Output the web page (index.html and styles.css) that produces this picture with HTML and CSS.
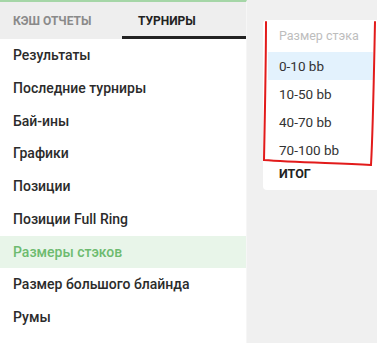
FILE: index.html
```html
<!DOCTYPE html>
<html lang="ru">
<head>
    <meta charset="UTF-8">
    <meta name="viewport" content="width=device-width, initial-scale=1.0">
    <title>Турниры</title>
    <link rel="stylesheet" href="styles.css">
</head>
<body>

<div class="page">
    <aside class="sidebar">
        <nav class="tabs">
            <button class="tab">Кэш отчеты</button>
            <button class="tab active">Турниры</button>
        </nav>
        <ul class="menu">
            <li>Результаты</li>
            <li>Последние турниры</li>
            <li>Бай-ины</li>
            <li>Графики</li>
            <li>Позиции</li>
            <li>Позиции Full Ring</li>
            <li class="active">Размеры стэков</li>
            <li>Размер большого блайнда</li>
            <li>Румы</li>
        </ul>
    </aside>

    <main class="content">
        <div class="card">
            <ul class="dropdown">
                <li class="placeholder">Размер стэка</li>
                <li class="selected">0-10 bb</li>
                <li>10-50 bb</li>
                <li>40-70 bb</li>
                <li>70-100 bb</li>
            </ul>
            <div class="total">ИТОГ</div>
        </div>
    </main>

    <!-- hand-drawn marker around the dropdown -->
    <svg class="marker" width="377" height="343" viewBox="0 0 377 343">
        <path d="M266 22 C266 60 265 110 264 160 C290 162 330 163 371 165 C373 130 374 70 375 22" />
    </svg>
</div>

</body>
</html>
```

FILE: styles.css
```css
body { margin: 0; font-family: Roboto, "Noto Sans", Arial, sans-serif; background-color: #f0f0f0; }
.page { position: relative; display: flex; width: 377px; height: 343px; overflow: hidden; }

.sidebar { width: 246px; flex: none; background-color: #fff; border-right: 1px solid #f6f6f6; border-top: 2px solid #a5d6a7; }
.tabs { display: flex; background-color: #eeeeee; height: 37px; }
.tab { border: none; background: none; font-family: inherit; font-size: 12px; font-weight: 700; text-transform: uppercase; text-align: left; cursor: pointer; padding: 0; }
.tab:first-child { width: 122px; padding-left: 13px; color: #8a8a8a; }
.tab.active { flex: 1; padding-left: 16px; color: #222; border-bottom: 3px solid #222; padding-top: 3px; }

.menu { list-style: none; margin: 0; padding: 0; }
.menu li { height: 32.75px; line-height: 32.75px; padding-left: 13px; font-size: 14px; font-weight: 500; color: #2b2b2b; }
.menu li.active { background-color: #e8f5e9; color: #6dbb6f; }

.content { flex: 1; padding: 20px 0 0 16px; }
.card { background-color: #fff; border-radius: 4px 0 0 4px; height: 168px; padding: 2px 0 0 5px; }
.dropdown { list-style: none; margin: 0; padding: 0; width: 105px; }
.dropdown li { height: 28px; line-height: 28px; padding-left: 11px; font-size: 13.5px; color: #333; }
.dropdown li.placeholder { height: 30px; line-height: 28px; color: #bdbdbd; font-size: 12.5px; }
.dropdown li.selected { background-color: #e3f2fd; }
.total { padding: 2px 0 0 11px; font-size: 12.5px; font-weight: 700; color: #222; }

.marker { position: absolute; left: 0; top: 0; pointer-events: none; }
.marker path { fill: none; stroke: #e21b1b; stroke-width: 2; stroke-linecap: round; }
```
